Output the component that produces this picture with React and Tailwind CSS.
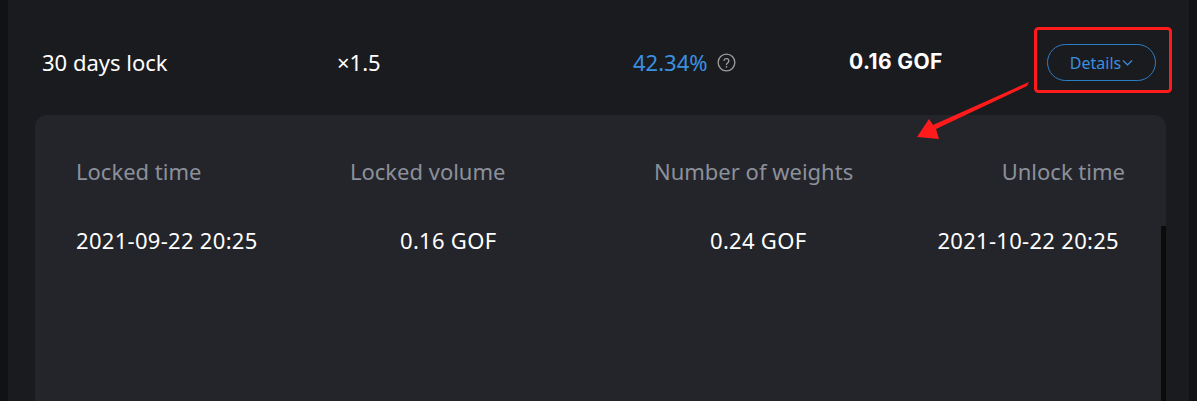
import React from "react";

function HelpIcon() {
  return (
    <svg width="19" height="19" viewBox="0 0 20 20" fill="none" className="ml-[9px]">
      <circle cx="10" cy="10" r="8.8" stroke="#9b9b9b" strokeWidth="1.4" />
      <path d="M7.4 7.8a2.6 2.6 0 0 1 5.1.7c0 1.7-2.5 2.1-2.5 3.6" stroke="#9b9b9b" strokeWidth="1.4" strokeLinecap="round" fill="none" />
      <circle cx="10" cy="14.6" r="0.9" fill="#9b9b9b" />
    </svg>
  );
}

export default function App() {
  const font = { fontFamily: '"Noto Sans", "Open Sans", sans-serif' };
  return (
    <div className="relative w-[1197px] h-[401px] overflow-hidden bg-[#111216] px-[8px] flex" style={font}>
      <div className="flex-1 bg-[#1a1b1f] flex flex-col">
        {/* top row */}
        <div className="flex items-center h-[81px] pt-[43px] pl-[34px] box-border">
          <div className="w-[295px] text-[22px] text-white leading-[28px]">30 days lock</div>
          <div className="w-[296px] text-[22px] text-white leading-[28px]">×1.5</div>
          <div className="w-[216px] flex items-center">
            <span className="text-[22px] text-[#3a91e0] leading-[28px]">42.34%</span>
            <HelpIcon />
          </div>
          <div className="w-[198px] text-[21px] font-bold text-white leading-[28px] tracking-[0.4px]" style={{ fontFamily: '"Inter", "Open Sans", sans-serif' }}>0.16 GOF</div>
          <button className="w-[109px] h-[37px] mt-[1px] rounded-full border border-[#2e7ec4] flex items-center justify-center text-[16px] text-[#3a8fde] bg-transparent">
            <span>Details</span>
            <svg width="11" height="8" viewBox="0 0 11 8" fill="none" className="ml-[1px] mt-[1px]">
              <path d="M1 1.5l4.5 4.5 4.5-4.5" stroke="#3a8fde" strokeWidth="1.2" />
            </svg>
          </button>
        </div>
        {/* detail panel */}
        <div className="relative mt-[34px] ml-[27px] mr-[23px] flex-1 bg-[#24252a] rounded-t-[12px]">
          <div className="flex justify-between px-[41px] pt-[42px] text-[22px] leading-[28px] text-[#8b909b]">
            <span>Locked time</span>
            <span>Locked volume</span>
            <span>Number of weights</span>
            <span>Unlock time</span>
          </div>
          <div className="flex pl-[41px] mt-[41px] text-[22px] leading-[28px] text-white tracking-[0.3px]">
            <span className="w-[324px]">2021-09-22 20:25</span>
            <span className="w-[310px]">0.16 GOF</span>
            <span>0.24 GOF</span>
            <span className="ml-auto mr-[47px]">2021-10-22 20:25</span>
          </div>
          <div className="absolute right-0 top-[111px] bottom-0 w-[5px] bg-[#0b0b0c]" />
        </div>
      </div>
      {/* annotation overlay */}
      <svg className="absolute left-0 top-0 pointer-events-none" width="1197" height="401">
        <rect x="1035.5" y="28.5" width="135" height="63" rx="3" fill="none" stroke="#ff1b1b" strokeWidth="3" />
        <polygon points="1029,82 1027,86 936,129 939,139 917,137 929,119 933,125" fill="#ff1b1b" />
      </svg>
    </div>
  );
}
